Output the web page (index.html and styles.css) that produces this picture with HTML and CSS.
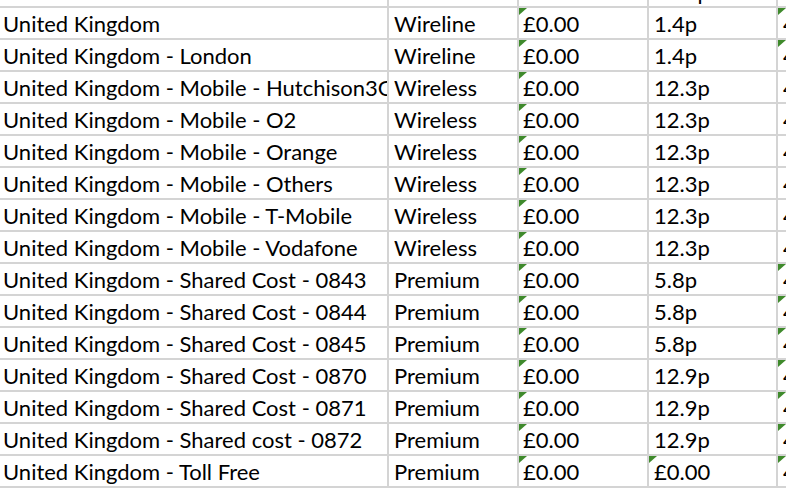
FILE: index.html
```html
<!DOCTYPE html>
<html>
<head>
<meta charset="utf-8">
<link rel="stylesheet" href="styles.css">
</head>
<body>
<div class="sheet">
  <div class="c">United Arab Emirates - Mobile</div><div class="c">Wireless</div><div class="c f">£0.00</div><div class="c">12.3p</div><div class="c f">4</div>
  <div class="c">United Kingdom</div><div class="c">Wireline</div><div class="c f">£0.00</div><div class="c">1.4p</div><div class="c f">4</div>
  <div class="c">United Kingdom - London</div><div class="c">Wireline</div><div class="c f">£0.00</div><div class="c">1.4p</div><div class="c f">4</div>
  <div class="c">United Kingdom - Mobile - Hutchison3G</div><div class="c">Wireless</div><div class="c f">£0.00</div><div class="c">12.3p</div><div class="c">4</div>
  <div class="c">United Kingdom - Mobile - O2</div><div class="c">Wireless</div><div class="c f">£0.00</div><div class="c">12.3p</div><div class="c">4</div>
  <div class="c">United Kingdom - Mobile - Orange</div><div class="c">Wireless</div><div class="c f">£0.00</div><div class="c">12.3p</div><div class="c">4</div>
  <div class="c">United Kingdom - Mobile - Others</div><div class="c">Wireless</div><div class="c f">£0.00</div><div class="c">12.3p</div><div class="c">4</div>
  <div class="c">United Kingdom - Mobile - T-Mobile</div><div class="c">Wireless</div><div class="c f">£0.00</div><div class="c">12.3p</div><div class="c">4</div>
  <div class="c">United Kingdom - Mobile - Vodafone</div><div class="c">Wireless</div><div class="c f">£0.00</div><div class="c">12.3p</div><div class="c">4</div>
  <div class="c">United Kingdom - Shared Cost - 0843</div><div class="c">Premium</div><div class="c f">£0.00</div><div class="c">5.8p</div><div class="c f">4</div>
  <div class="c">United Kingdom - Shared Cost - 0844</div><div class="c">Premium</div><div class="c f">£0.00</div><div class="c">5.8p</div><div class="c f">4</div>
  <div class="c">United Kingdom - Shared Cost - 0845</div><div class="c">Premium</div><div class="c f">£0.00</div><div class="c">5.8p</div><div class="c f">4</div>
  <div class="c">United Kingdom - Shared Cost - 0870</div><div class="c">Premium</div><div class="c f">£0.00</div><div class="c">12.9p</div><div class="c f">4</div>
  <div class="c">United Kingdom - Shared Cost - 0871</div><div class="c">Premium</div><div class="c f">£0.00</div><div class="c">12.9p</div><div class="c f">4</div>
  <div class="c">United Kingdom - Shared cost - 0872</div><div class="c">Premium</div><div class="c f">£0.00</div><div class="c">12.9p</div><div class="c f">4</div>
  <div class="c">United Kingdom - Toll Free</div><div class="c">Premium</div><div class="c f">£0.00</div><div class="c f">£0.00</div><div class="c f">4</div>
  <div class="c"></div><div class="c"></div><div class="c"></div><div class="c"></div><div class="c"></div>
</div>
</body>
</html>
```
FILE: styles.css
```css
html, body {
  margin: 0;
  padding: 0;
  background: #ffffff;
  overflow: hidden;
}
.sheet {
  display: grid;
  grid-template-columns: 387px 128px 128px 127px 60px;
  grid-auto-rows: 30px;
  gap: 2px;
  background: #d4d4d4;
  margin-top: -24px;
  width: 838px;
  font-family: "Lato", "Liberation Sans", sans-serif;
  font-size: 22px;
  color: #000;
}
.c {
  position: relative;
  background: #ffffff;
  display: flex;
  align-items: flex-end;
  padding: 0 0 3px 5px;
  line-height: 1;
  white-space: nowrap;
  overflow: hidden;
}
.c:nth-child(5n+1) {
  padding-left: 3px;
}
.c:nth-child(5n+3) {
  padding-left: 4px;
}
.f::before {
  content: "";
  position: absolute;
  left: 0;
  top: 0;
  width: 8px;
  height: 7px;
  background: #3f8a2c;
  clip-path: polygon(0 0, 100% 0, 0 100%);
}
```
